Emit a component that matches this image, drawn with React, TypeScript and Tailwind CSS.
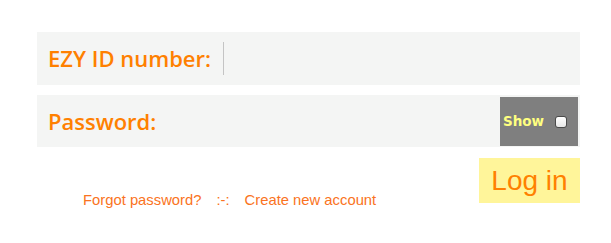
export default function App() {
  return (
    <div className="min-h-[243px] w-[611px] bg-white">
      <div className="ml-[37px] w-[543px] pt-[32px]">
        {/* EZY ID row */}
        <div className="flex h-[53px] items-center bg-[#f4f5f4] pl-[11px]">
          <span className="font-['Open_Sans',sans-serif] text-[22px] font-semibold text-[#ff8000]">
            EZY ID number:
          </span>
          <span className="ml-[12px] h-[33px] w-px bg-[#c4c4c4]" />
        </div>

        {/* Password row */}
        <div className="mt-[10px] flex h-[52px] bg-[#f4f5f4] pl-[11px]">
          <span className="self-center font-['Open_Sans',sans-serif] text-[22px] font-semibold text-[#ff8000]">
            Password:
          </span>
          <div className="ml-auto mr-[2px] mt-[2px] flex h-[49px] w-[78px] items-center bg-[#7f7f7f] pl-[3px]">
            <span className="font-['DejaVu_Sans',sans-serif] text-[13.5px] font-bold text-[#ffff80]">Show</span>
            <span className="ml-[11px] h-[12px] w-[12px] rounded-[3px] border border-[#4a4a4a] bg-gradient-to-b from-white to-[#e6e6e6]" />
          </div>
        </div>

        {/* Bottom: links + login */}
        <div className="mt-[11px] flex items-start">
          <div className="mt-[31px] flex pl-[46px] font-['Liberation_Sans',Arial,sans-serif] text-[14.8px] text-[#fa7322]">
            <span>Forgot password?</span>
            <span className="ml-[15px]">:-:</span>
            <span className="ml-[15px]">Create new account</span>
          </div>
          <button className="ml-auto flex h-[45px] w-[101px] items-center justify-center bg-[#fff59a] font-['Liberation_Sans',Arial,sans-serif] text-[28px] text-[#ff8000]">
            Log in
          </button>
        </div>
      </div>
    </div>
  );
}
